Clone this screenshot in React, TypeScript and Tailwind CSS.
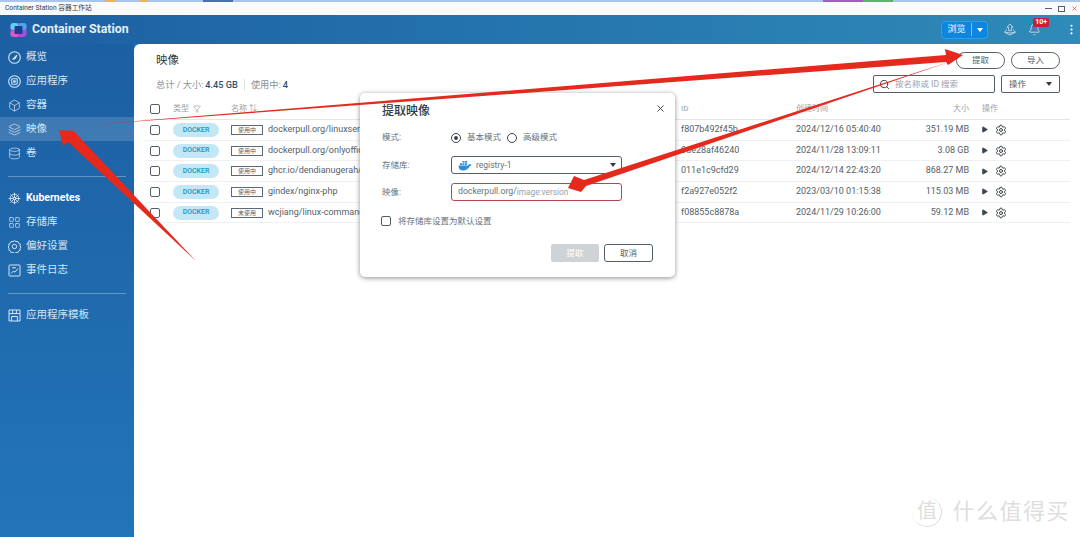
import React from 'react';
import { Bell, Box, Database, Filter, Layers, LayoutGrid, MoreVertical, Play, Search, Settings, ShipWheel, X } from 'lucide-react';

const FONT = "font-['Roboto','Noto_Sans_CJK_SC',sans-serif]";

type IconProps = { size?: number; strokeWidth?: number };

function OverviewIcon({ size = 13 }: IconProps) {
    return (
        <svg width={size} height={size} viewBox="0 0 13 13" fill="none" stroke="currentColor" strokeWidth="1.1">
            <circle cx="6.5" cy="6.5" r="5.8" />
            <path d="M4.6 8.4 8.9 4.1 7.4 7.4z" fill="currentColor" />
        </svg>
    );
}

function AppsIcon({ size = 13 }: IconProps) {
    return (
        <svg width={size} height={size} viewBox="0 0 13 13" fill="none" stroke="currentColor" strokeWidth="1.1">
            <circle cx="6.5" cy="6.5" r="5.8" />
            <rect x="3.8" y="3.8" width="5.4" height="5.4" rx="0.8" />
            <path d="M5.3 5.3h2.4v2.4H5.3z" fill="currentColor" stroke="none" />
        </svg>
    );
}

function PrefsIcon({ size = 13 }: IconProps) {
    return (
        <svg width={size} height={size} viewBox="0 0 13 13" fill="none" stroke="currentColor" strokeWidth="1">
            <path d="M6.5.7 8 1.6l1.8-.1.8 1.6 1.6.9-.2 1.8.8 1.3-.8 1.3.2 1.7-1.6.9-.8 1.6-1.8-.1-1.5.9-1.5-.9-1.8.1-.8-1.6-1.6-.9.2-1.7L.2 7.1 1 5.8.8 4l1.6-.9.8-1.6L5 1.6z" />
            <circle cx="6.5" cy="6.5" r="2.2" />
        </svg>
    );
}

function LogIcon({ size = 13 }: IconProps) {
    return (
        <svg width={size} height={size} viewBox="0 0 13 13" fill="none" stroke="currentColor" strokeWidth="1">
            <rect x="1" y="1" width="11" height="11" rx="0.8" />
            <path d="M3 9.5 5.5 7l1.5 1.2L10 4.5M4 3.8h4" />
        </svg>
    );
}

function TemplateIcon({ size = 13 }: IconProps) {
    return (
        <svg width={size} height={size} viewBox="0 0 13 13" fill="none" stroke="currentColor" strokeWidth="1">
            <path d="M1 1h11v11H1zM1 4.6h11M4.6 1v3.6M8.4 1v3.6M3.6 12V7.5h5.8V12" />
        </svg>
    );
}

function PushIcon() {
    return (
        <svg width="12" height="13" viewBox="0 0 12 13" fill="none" stroke="currentColor" strokeWidth="1">
            <path d="M6 1 3 4.2h1.6v3.6h2.8V4.2H9z" />
            <path d="M2.6 6.5.7 9.3 6 12l5.3-2.7-1.9-2.8" />
            <path d="M.7 9.3 6 10l5.3-.7" />
        </svg>
    );
}

const navTop = [
    { label: '概览', icon: OverviewIcon },
    { label: '应用程序', icon: AppsIcon },
    { label: '容器', icon: Box },
    { label: '映像', icon: Layers, active: true },
    { label: '卷', icon: Database },
];

const navMiddle = [
    { label: 'Kubernetes', icon: ShipWheel, bold: true },
    { label: '存储库', icon: LayoutGrid },
    { label: '偏好设置', icon: PrefsIcon },
    { label: '事件日志', icon: LogIcon },
];

const rows = [
    { status: '使用中', name: 'dockerpull.org/linuxserver/', id: 'f807b492f45b', time: '2024/12/16 05:40:40', size: '351.19 MB' },
    { status: '使用中', name: 'dockerpull.org/onlyoffice/', id: '0de28af46240', time: '2024/11/28 13:09:11', size: '3.08 GB' },
    { status: '使用中', name: 'ghcr.io/dendianugerah/re', id: '011e1c9cfd29', time: '2024/12/14 22:43:20', size: '868.27 MB' },
    { status: '使用中', name: 'gindex/nginx-php', id: 'f2a927e052f2', time: '2023/03/10 01:15:38', size: '115.03 MB' },
    { status: '未使用', name: 'wcjiang/linux-command', id: 'f08855c8878a', time: '2024/11/29 10:26:00', size: '59.12 MB' },
];

function NavItem({ label, icon: Icon, active, bold }: { label: string; icon: React.ElementType; active?: boolean; bold?: boolean }) {
    return (
        <div className={`flex h-6 items-center gap-[5px] pl-2 text-[10.5px] text-[#d5e6f5] ${active ? 'bg-white/15' : ''} ${bold ? 'font-bold text-white' : ''}`}>
            <Icon size={13} strokeWidth={1.3} />
            <span>{label}</span>
        </div>
    );
}

function Logo() {
    return (
        <svg width="17" height="16" viewBox="0 0 17 16">
            <rect x="0.5" y="1" width="16" height="14" rx="3.5" fill="#9b55d8" />
            <rect x="0.5" y="1" width="8" height="7" rx="3" fill="#5fd0ee" />
            <rect x="8.5" y="1" width="8" height="7" rx="3" fill="#4aa5ee" />
            <rect x="0.5" y="9" width="8" height="6" rx="3" fill="#d85bc4" />
            <rect x="4.5" y="4" width="8" height="8" rx="1" fill="#1c3f8f" />
        </svg>
    );
}

function Whale() {
    return (
        <svg width="14" height="11" viewBox="0 0 14 11">
            <path d="M0.5 5.5h9.5c.4-1.2 1.4-1.6 3.4-1-.2 1-.8 1.6-1.8 1.8C10.5 9 8.2 10.5 5 10.5 2 10.5.6 8.5.5 5.5z" fill="#2b8fd8" />
            <rect x="2" y="3.3" width="2" height="1.7" fill="#2b8fd8" />
            <rect x="4.5" y="3.3" width="2" height="1.7" fill="#2b8fd8" />
            <rect x="7" y="3.3" width="2" height="1.7" fill="#2b8fd8" />
            <rect x="4.5" y="1" width="2" height="1.7" fill="#2b8fd8" />
            <rect x="7" y="1" width="2" height="1.7" fill="#2b8fd8" />
        </svg>
    );
}

function Checkbox({ className = '' }: { className?: string }) {
    return <span className={`block h-[10px] w-[10px] rounded-[2px] border border-[#555e68] bg-white ${className}`} />;
}

const tableCols = 'grid grid-cols-[28px_58px_450px_115px_108px_65px_1fr] items-center';

function ImageTable() {
    return (
        <div className="ml-[11px] mr-[10px] mt-[6px] text-[9px] text-[#555e68]">
            <div className={`${tableCols} h-[21px] border-b border-[#e3e6ea] text-[8px] text-[#9aa1a9]`}>
                <div className="pl-[5px]"><Checkbox /></div>
                <div className="flex items-center gap-1">类型 <Filter size={8} /></div>
                <div>名称 ⇅</div>
                <div>ID</div>
                <div>创建时间</div>
                <div className="text-right">大小</div>
                <div className="pl-[13px]">操作</div>
            </div>
            {rows.map((row) => (
                <div key={row.id} className={`${tableCols} h-[20.7px] border-b border-[#eef0f2]`}>
                    <div className="pl-[5px]"><Checkbox /></div>
                    <div>
                        <span className="flex h-[14px] w-[46px] items-center justify-center rounded-full bg-[#c4e7f5] text-[7px] font-medium text-[#1a93b8]">DOCKER</span>
                    </div>
                    <div className="flex items-center gap-[5px]">
                        <span className="flex h-[10px] w-[32px] items-center justify-center border border-[#5a6a7c] text-[6px] leading-none">{row.status}</span>
                        <span className="whitespace-nowrap">{row.name}</span>
                    </div>
                    <div>{row.id}</div>
                    <div className="whitespace-nowrap">{row.time}</div>
                    <div className="text-right">{row.size}</div>
                    <div className="flex items-center gap-[7px] pl-[12px] text-[#3c444d]">
                        <Play size={7} fill="currentColor" />
                        <Settings size={12} />
                    </div>
                </div>
            ))}
        </div>
    );
}

function PullDialog() {
    return (
        <div className="absolute left-[360px] top-[93px] h-[184px] w-[315px] rounded-[5px] bg-white px-[22px] pt-[9px] text-[8.5px] text-[#6a727b] shadow-[0_1px_5px_rgba(0,0,0,0.45)]">
            <div className="flex items-center justify-between">
                <span className="text-[12px] font-medium text-[#333a42]">提取映像</span>
                <X size={11} className="-mr-[13px] -mt-[5px] text-[#333a42]" />
            </div>
            <div className="mt-[11px] flex h-[13px] items-center">
                <span className="w-[69px]">模式:</span>
                <span className="flex h-[10px] w-[10px] items-center justify-center rounded-full border border-[#3c444d]">
                    <span className="h-[4px] w-[4px] rounded-full bg-[#3c444d]" />
                </span>
                <span className="ml-[6px]">基本模式</span>
                <span className="ml-[6px] h-[10px] w-[10px] rounded-full border border-[#3c444d]" />
                <span className="ml-[6px]">高级模式</span>
            </div>
            <div className="mt-[12px] flex h-[18px] items-center">
                <span className="w-[69px]">存储库:</span>
                <div className="flex h-[18px] w-[171px] items-center justify-between rounded-[3px] border border-[#555e68] pl-[6px] pr-[5px]">
                    <span className="flex items-center gap-[4px]"><Whale /> registry-1</span>
                    <span className="h-0 w-0 border-x-[3px] border-t-[4px] border-x-transparent border-t-[#333a42]" />
                </div>
            </div>
            <div className="mt-[9px] flex h-[18px] items-center">
                <span className="w-[69px]">映像:</span>
                <div className="flex h-[18px] w-[171px] items-center rounded-[3px] border border-[#b5474f] pl-[6px]">
                    <span className="text-[8.7px]">dockerpull.org/</span>
                    <span className="text-[8.3px] text-[#9aa1a9]">image:version</span>
                </div>
            </div>
            <div className="mt-[14px] flex h-[12px] items-center gap-[7px]">
                <Checkbox className="-ml-px" />
                <span>将存储库设置为默认设置</span>
            </div>
            <div className="mt-[17px] flex justify-end gap-[5px]">
                <span className="flex h-[18px] w-[48px] items-center justify-center rounded-[2px] bg-[#d0d3d6] text-white">提取</span>
                <span className="flex h-[18px] w-[49px] items-center justify-center rounded-[3px] border border-[#555e68] text-[#555e68]">取消</span>
            </div>
        </div>
    );
}

export default function App() {
    return (
        <div className={`${FONT} relative flex h-[537px] w-[1080px] flex-col overflow-hidden bg-[#1f6cb0]`}>
            <div className="flex h-[2px] bg-[#a9c6ea]">
                <div className="ml-[105px] w-[10px] bg-[#f0b060]" />
                <div className="ml-[25px] w-[8px] bg-[#f0b060]" />
                <div className="ml-[55px] w-[30px] bg-[#4a6fb0]" />
                <div className="ml-[590px] w-[40px] bg-[#a060c0]" />
                <div className="w-[30px] bg-[#60b070]" />
            </div>
            <div className="flex h-[13px] items-center justify-between bg-[#f8fafc] pl-[5px] pr-[2px] text-[6.7px] text-[#333a42]">
                <span>Container Station 容器工作站</span>
                <span className="flex items-center gap-[6px]">
                    <span className="h-px w-[7px] bg-[#555e68]" />
                    <span className="h-[6px] w-[7px] border border-[#555e68]" />
                    <X size={7} className="text-[#d03030]" />
                </span>
            </div>
            <div className="flex h-[29px] items-center justify-between bg-gradient-to-r from-[#1d5fa3] to-[#2f8bb8] pl-[10px] pr-[2px]">
                <div className="flex items-center gap-[5px] text-[12.3px] font-bold text-[#e6f0f9]">
                    <Logo />
                    <span>Container Station</span>
                </div>
                <div className="flex items-center text-white">
                    <div className="flex h-[18px] w-[47px] items-center rounded-[4px] border border-[#2aa0f0] bg-[#0d86e0] text-[9px]">
                        <span className="w-[30px] border-r border-white/50 text-center">浏览</span>
                        <span className="ml-[5px] h-0 w-0 border-x-[3.5px] border-t-[4px] border-x-transparent border-t-white" />
                    </div>
                    <span className="ml-[16px] text-[#b9d3e4]"><PushIcon /></span>
                    <div className="relative ml-[12px]">
                        <Bell size={13} strokeWidth={1.4} className="text-[#dbe8f1]" />
                        <span className="absolute -right-[8px] -top-[5px] rounded-[2px] bg-[#c8202f] px-[2px] text-[7px] font-bold leading-[9px]">10+</span>
                    </div>
                    <MoreVertical size={13} className="ml-[24px]" />
                </div>
            </div>
            <div className="flex min-h-0 flex-1">
                <aside className="w-[134px] shrink-0 bg-gradient-to-b from-[#1d5fa3] to-[#2275b8] pt-[1px]">
                    {navTop.map((item) => <NavItem key={item.label} {...item} />)}
                    <div className="mx-2 mb-[9px] mt-[11px] h-px bg-white/30" />
                    {navMiddle.map((item) => <NavItem key={item.label} {...item} />)}
                    <div className="mx-2 mb-[9px] mt-[11px] h-px bg-white/30" />
                    <NavItem label="应用程序模板" icon={TemplateIcon} />
                </aside>
                <main className="min-w-0 flex-1 rounded-tl-[6px] bg-white">
                    <div className="flex justify-between pl-[22px] pr-[20px] pt-[8px]">
                        <div>
                            <div className="text-[11.5px] text-[#333a42]">映像</div>
                            <div className="mt-[9px] flex items-center text-[9.2px] text-[#8a929a]">
                                总计 / 大小:<span className="ml-[2px] font-medium text-[#2f4f70]">4.45 GB</span>
                                <span className="mx-[6px] h-[12px] w-px bg-[#dfe2e6]" />
                                使用中:<span className="ml-[2px] font-medium text-[#2f4f70]">4</span>
                            </div>
                        </div>
                        <div className="flex flex-col items-end">
                            <div className="flex gap-[6px] text-[8.5px] text-[#555e68]">
                                <span className="flex h-[17px] w-[49px] items-center justify-center rounded-full border border-[#555e68]">提取</span>
                                <span className="flex h-[17px] w-[49px] items-center justify-center rounded-full border border-[#555e68]">导入</span>
                            </div>
                            <div className="mt-[6px] flex gap-[6px] text-[8.5px] text-[#9aa1a9]">
                                <span className="flex h-[18px] w-[122px] items-center gap-[5px] rounded-[2px] border border-[#555e68] pl-[5px]">
                                    <Search size={11} className="text-[#333a42]" /> 按名称或 ID 搜索
                                </span>
                                <span className="flex h-[18px] w-[59px] items-center justify-between rounded-[2px] border border-[#555e68] px-[7px] text-[#555e68]">
                                    操作
                                    <span className="h-0 w-0 border-x-[3px] border-t-[4px] border-x-transparent border-t-[#333a42]" />
                                </span>
                            </div>
                        </div>
                    </div>
                    <ImageTable />
                </main>
            </div>
            <PullDialog />
            <svg className="pointer-events-none absolute left-0 top-0" width="1080" height="537" viewBox="0 0 1080 537">
                <polygon points="88,125 946,55 945,49 963,55 948,65 946,62" fill="#e5291d" />
                <polygon points="955,60 584,180 574,176 568,188 581,192 586,186" fill="#e5291d" />
                <polygon points="196,261 82,140 74,131 59,130 63,146 68,142" fill="#e5291d" />
            </svg>
            <div className="pointer-events-none absolute bottom-[9px] right-[10px] flex items-center gap-[10px] text-[22px] tracking-[1.5px] text-[#dedede]">
                <span className="flex h-[30px] w-[30px] items-center justify-center rounded-full border-b border-r border-[#dedede] text-[20px] tracking-normal">值</span>
                <span>什么值得买</span>
            </div>
        </div>
    );
}
